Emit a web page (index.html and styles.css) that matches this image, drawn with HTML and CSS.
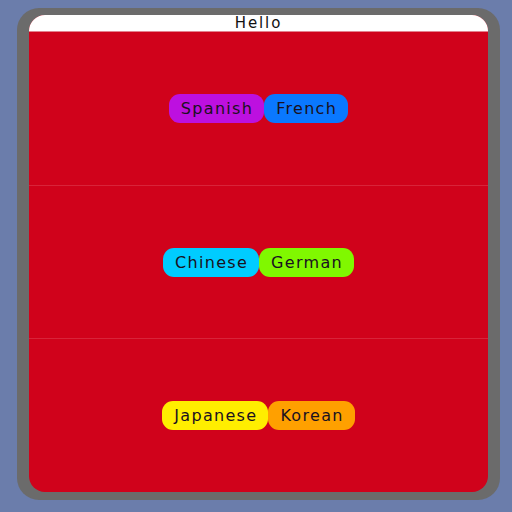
FILE: index.html
```html
<!DOCTYPE html>
<html>
<head>
<meta charset="utf-8">
<link rel="stylesheet" href="styles.css">
</head>
<body>
<div class="device">
  <div class="screen">
    <div class="header">Hello</div>
    <div class="rows">
      <div class="row">
        <div class="pills">
          <span class="pill spanish">Spanish</span>
          <span class="pill french">French</span>
        </div>
      </div>
      <div class="row">
        <div class="pills">
          <span class="pill chinese">Chinese</span>
          <span class="pill german">German</span>
        </div>
      </div>
      <div class="row">
        <div class="pills">
          <span class="pill japanese">Japanese</span>
          <span class="pill korean">Korean</span>
        </div>
      </div>
    </div>
  </div>
</div>
</body>
</html>
```
FILE: styles.css
```css
html, body {
  margin: 0;
  padding: 0;
  width: 512px;
  height: 512px;
  background: #6b7dab;
  overflow: hidden;
}
body {
  padding: 8px 12px 12px 17px;
  box-sizing: border-box;
  font-family: "DejaVu Sans", sans-serif;
}
.device {
  width: 483px;
  height: 492px;
  background: #6b6b6b;
  border-radius: 22px;
  padding: 7px 12px 8px 12px;
  box-sizing: border-box;
}
.screen {
  height: 100%;
  border-radius: 16px;
  overflow: hidden;
  background: #d0021b;
  display: flex;
  flex-direction: column;
}
.header {
  height: 16px;
  background: #ffffff;
  color: #111;
  font-size: 15px;
  line-height: 17px;
  text-align: center;
  letter-spacing: 1.9px;
  border-bottom: 1px solid #e3828d;
}
.rows {
  flex: 1;
  display: flex;
  flex-direction: column;
}
.row {
  flex: 1;
  display: flex;
  align-items: center;
  justify-content: center;
}
.row + .row {
  border-top: 1px solid #d8243a;
}
.pills {
  display: flex;
}
.pill {
  height: 29px;
  line-height: 30px;
  padding: 0 11px 0 12px;
  border-radius: 11px;
  font-size: 16px;
  letter-spacing: 1.3px;
  color: #1a1020;
}
.spanish { background: #bd10e0; }
.french { background: #0a78ff; }
.chinese { background: #00ccff; }
.german { background: #80f800; }
.japanese { background: #ffee00; }
.korean { background: #ffa000; }
```
